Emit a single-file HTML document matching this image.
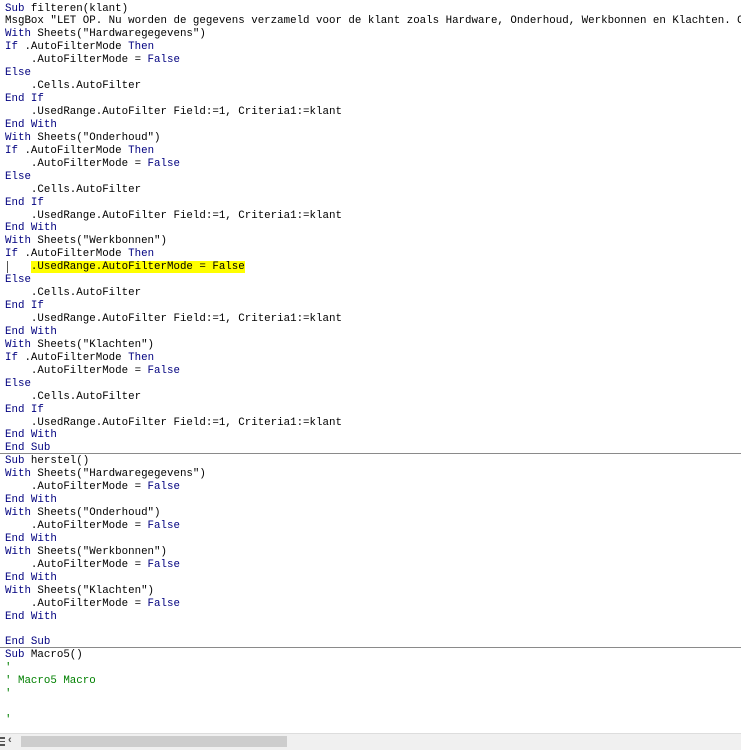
<!DOCTYPE html>
<html><head><meta charset="utf-8"><style>
html,body{margin:0;padding:0;background:#fff;width:741px;height:750px;overflow:hidden;position:relative}
pre{position:absolute;left:5px;top:2.5px;margin:0;font-family:"Liberation Mono",monospace;font-size:10.8px;line-height:12.94px;color:#000;white-space:pre}
.k{color:#00007f}
.c{color:#008000}
.h{background:#ffff00}
.sep{position:absolute;left:0;width:741px;height:1px;background:#8a8a8a}
.cur{position:absolute;left:7px;top:261px;width:1px;height:12px;background:#555}
.sb{position:absolute;left:0;top:733px;width:741px;height:17px;background:#f0f0f0;border-top:1px solid #ddd}
.thumb{position:absolute;left:21px;top:736px;width:266px;height:11px;background:#cdcdcd}
</style></head><body>
<pre><span class="k">Sub</span> filteren(klant)
MsgBox "LET OP. Nu worden de gegevens verzameld voor de klant zoals Hardware, Onderhoud, Werkbonnen en Klachten. O
<span class="k">With</span> Sheets("Hardwaregegevens")
<span class="k">If</span> .AutoFilterMode <span class="k">Then</span>
    .AutoFilterMode = <span class="k">False</span>
<span class="k">Else</span>
    .Cells.AutoFilter
<span class="k">End If</span>
    .UsedRange.AutoFilter Field:=1, Criteria1:=klant
<span class="k">End With</span>
<span class="k">With</span> Sheets("Onderhoud")
<span class="k">If</span> .AutoFilterMode <span class="k">Then</span>
    .AutoFilterMode = <span class="k">False</span>
<span class="k">Else</span>
    .Cells.AutoFilter
<span class="k">End If</span>
    .UsedRange.AutoFilter Field:=1, Criteria1:=klant
<span class="k">End With</span>
<span class="k">With</span> Sheets("Werkbonnen")
<span class="k">If</span> .AutoFilterMode <span class="k">Then</span>
    <span class="h">.UsedRange.AutoFilterMode = False</span>
<span class="k">Else</span>
    .Cells.AutoFilter
<span class="k">End If</span>
    .UsedRange.AutoFilter Field:=1, Criteria1:=klant
<span class="k">End With</span>
<span class="k">With</span> Sheets("Klachten")
<span class="k">If</span> .AutoFilterMode <span class="k">Then</span>
    .AutoFilterMode = <span class="k">False</span>
<span class="k">Else</span>
    .Cells.AutoFilter
<span class="k">End If</span>
    .UsedRange.AutoFilter Field:=1, Criteria1:=klant
<span class="k">End With</span>
<span class="k">End Sub</span>
<span class="k">Sub</span> herstel()
<span class="k">With</span> Sheets("Hardwaregegevens")
    .AutoFilterMode = <span class="k">False</span>
<span class="k">End With</span>
<span class="k">With</span> Sheets("Onderhoud")
    .AutoFilterMode = <span class="k">False</span>
<span class="k">End With</span>
<span class="k">With</span> Sheets("Werkbonnen")
    .AutoFilterMode = <span class="k">False</span>
<span class="k">End With</span>
<span class="k">With</span> Sheets("Klachten")
    .AutoFilterMode = <span class="k">False</span>
<span class="k">End With</span>

<span class="k">End Sub</span>
<span class="k">Sub</span> Macro5()
<span class="c">'</span>
<span class="c">' Macro5 Macro</span>
<span class="c">'</span>

<span class="c">'</span>
</pre>
<div class="cur"></div>
<div class="sep" style="top:453px"></div>
<div class="sep" style="top:647px"></div>
<div class="sb"></div>
<div class="thumb"></div>
<div style="position:absolute;left:0;top:737px;width:5px;height:9px;border-top:2px solid #555;border-bottom:2px solid #555;box-sizing:border-box"></div>
<div style="position:absolute;left:0;top:741px;width:5px;height:1px;background:#555"></div>
<div style="position:absolute;left:8px;top:734px;font:bold 11px 'Liberation Sans',sans-serif;color:#555">‹</div>
</body></html>
